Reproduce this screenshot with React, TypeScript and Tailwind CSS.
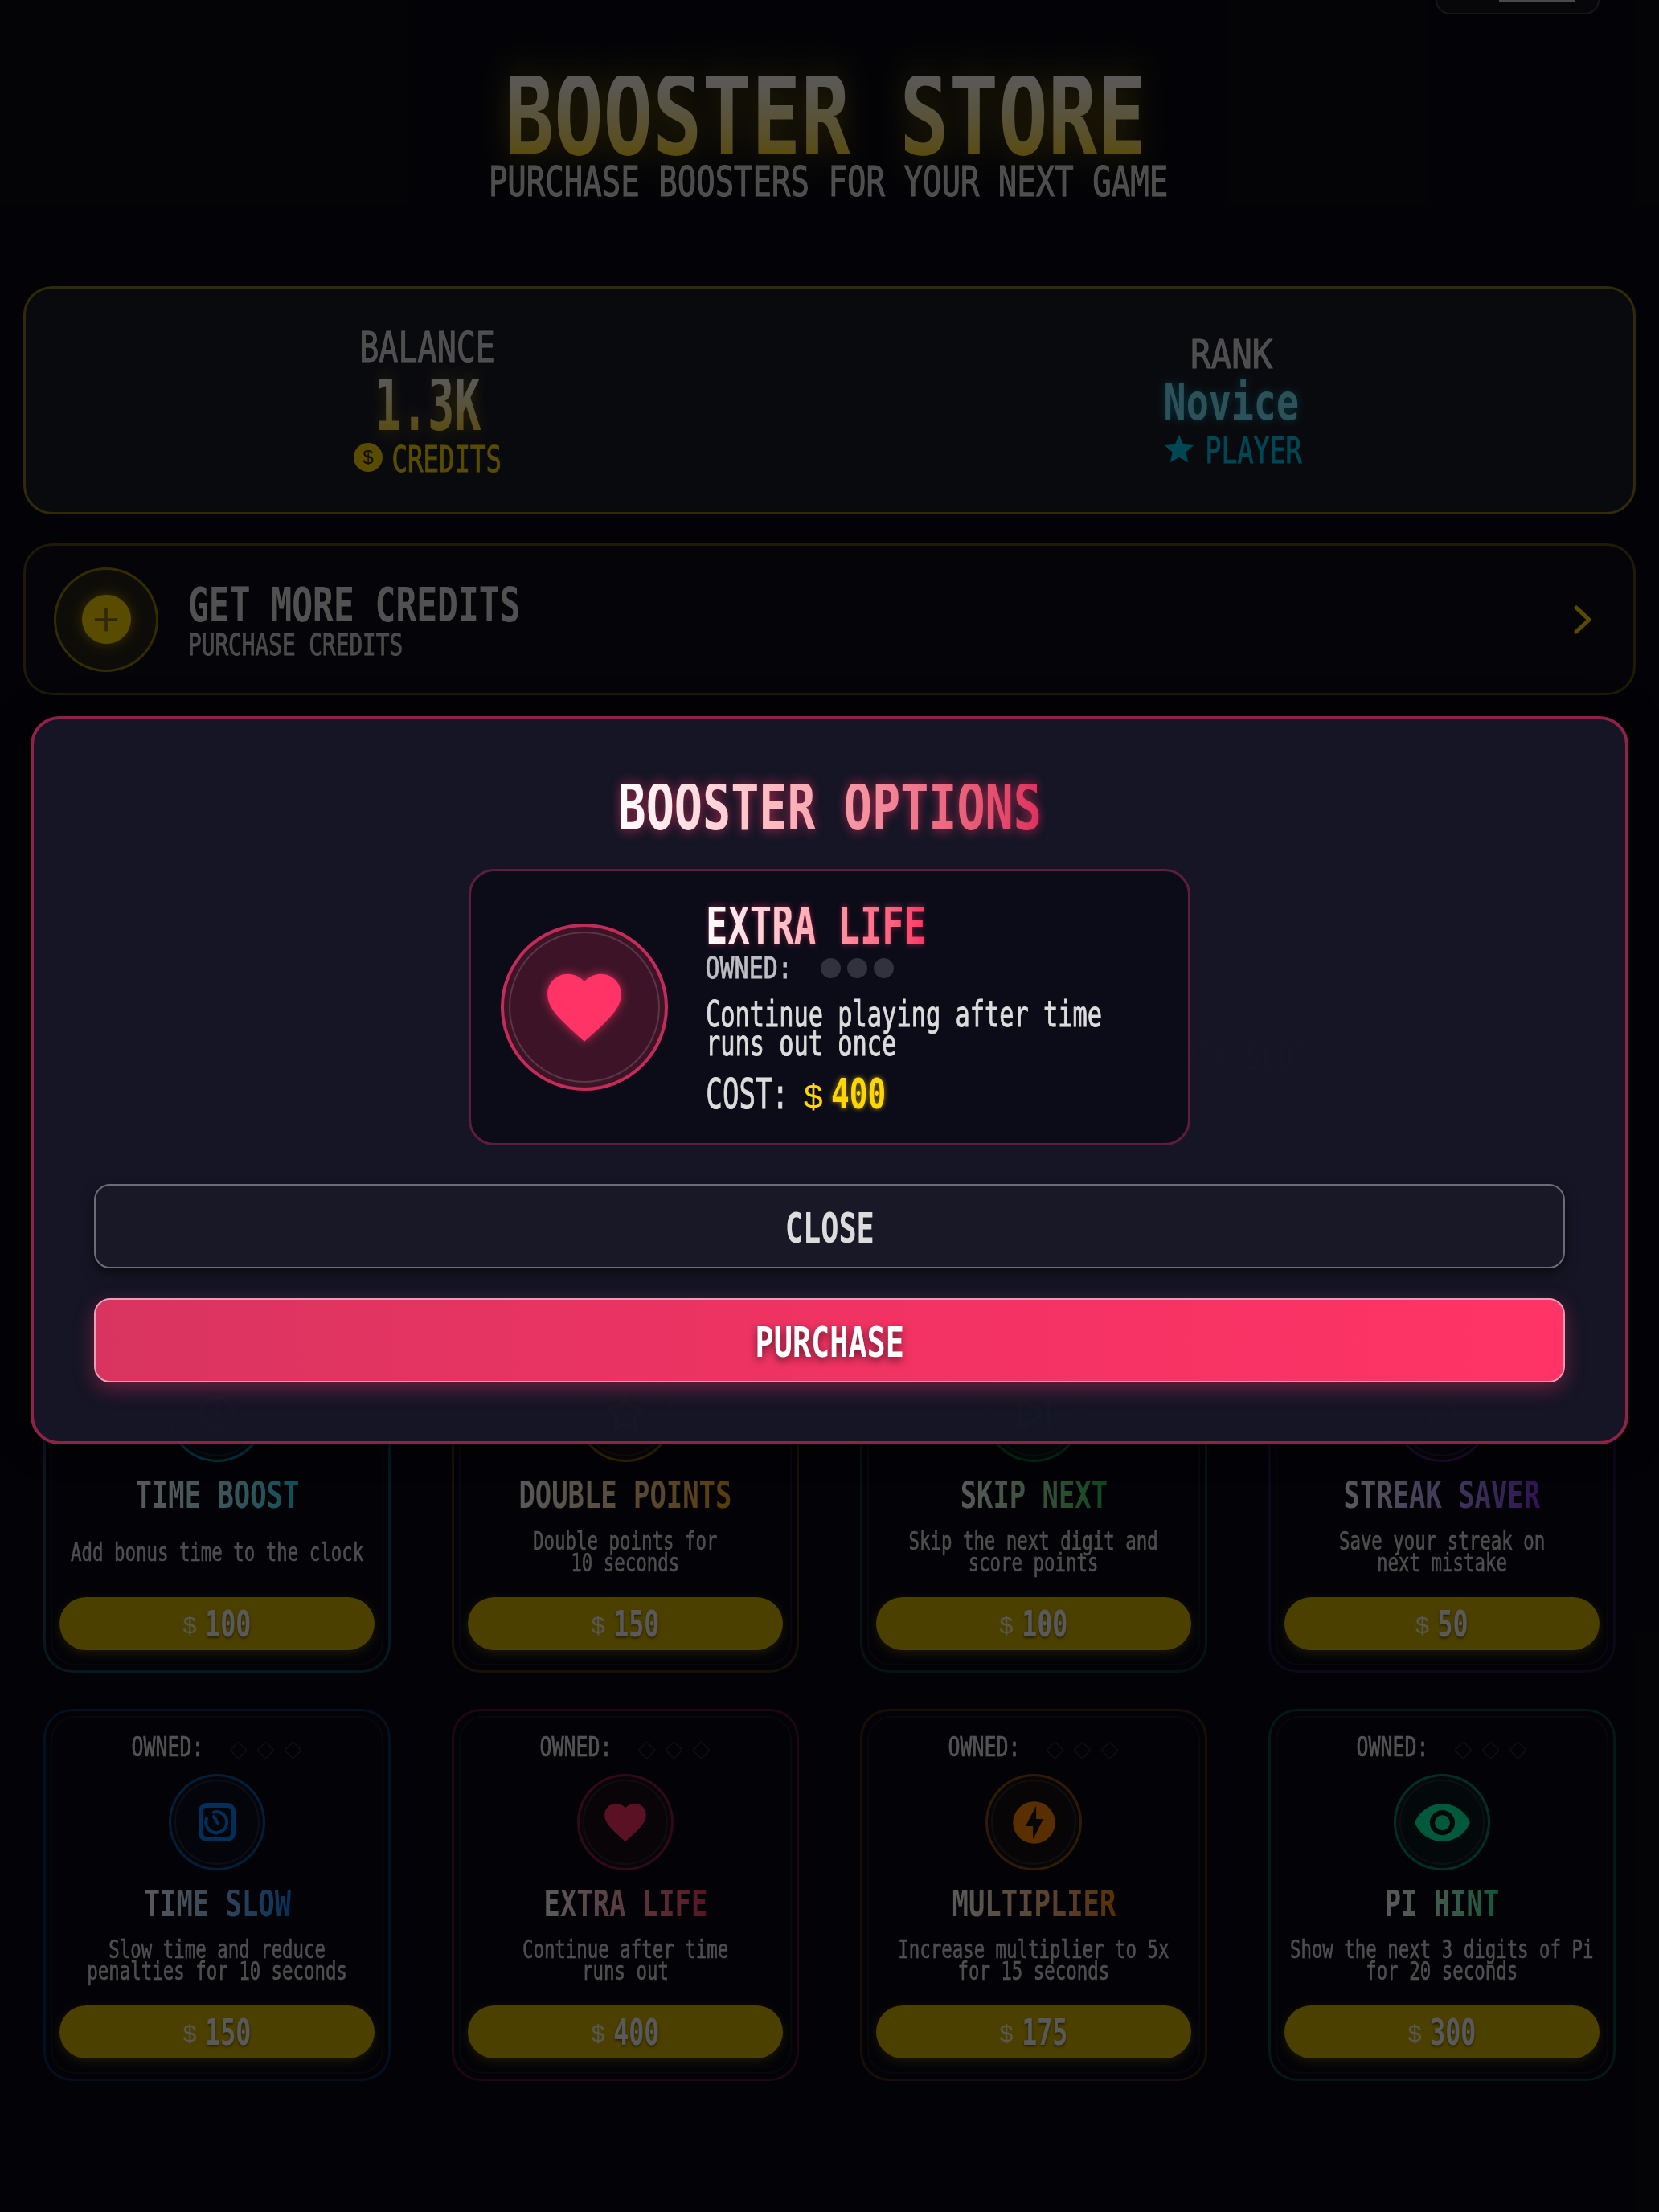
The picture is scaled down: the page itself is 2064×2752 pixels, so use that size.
import React from "react";
import { Clock, Star, SkipForward, Shield } from "lucide-react";

const heartPath =
  "M12 21.35l-1.45-1.32C5.4 15.36 2 12.28 2 8.5 2 5.42 4.42 3 7.5 3c1.74 0 3.41.81 4.5 2.09C13.09 3.81 14.76 3 16.5 3 19.58 3 22 5.42 22 8.5c0 3.78-3.4 6.86-8.55 11.54L12 21.35z";

function HeartIcon({ className }: { className: string }) {
  return (
    <svg viewBox="0 0 24 24" className={className} fill="currentColor">
      <path d={heartPath} />
    </svg>
  );
}

function TimerIcon() {
  return (
    <svg viewBox="0 0 46 48" className="h-[48px] w-[46px] text-[#0088ff]" fill="none" stroke="currentColor">
      <rect x="3" y="3" width="40" height="42" rx="7" strokeWidth="6" />
      <path d="M19 11.5a13 13 0 1 1-9 8" strokeWidth="4" strokeLinecap="round" />
      <path d="M19 17l5 8" strokeWidth="4" strokeLinecap="round" />
    </svg>
  );
}

function BoltIcon() {
  return (
    <svg viewBox="0 0 24 24" className="h-[63px] w-[63px] text-[#ff8800]" fill="currentColor">
      <path d="M12 2.02c-5.51 0-9.98 4.47-9.98 9.98s4.47 9.98 9.98 9.98 9.98-4.47 9.98-9.98S17.51 2.02 12 2.02zM11.48 20v-6.26H8L13 4v6.26h3.35L11.48 20z" />
    </svg>
  );
}

function EyeIcon() {
  return (
    <svg viewBox="0 0 24 24" className="h-[75px] w-[75px] text-[#00ffaa]" fill="currentColor">
      <path d="M12 4.5C7 4.5 2.73 7.61 1 12c1.73 4.39 6 7.5 11 7.5s9.27-3.11 11-7.5c-1.73-4.39-6-7.5-11-7.5zM12 17c-2.76 0-5-2.24-5-5s2.24-5 5-5 5 2.24 5 5-2.24 5-5 5zm0-8c-1.66 0-3 1.34-3 3s1.34 3 3 3 3-1.34 3-3-1.34-3-3-3z" />
    </svg>
  );
}

// the pixel font of the game isn't available, so a mono face gets squeezed to its width
function Sq({ box, sq, children }: { box: string; sq: string; children: React.ReactNode }) {
  return (
    <span className={`flex shrink-0 justify-center whitespace-nowrap ${box}`}>
      <span className={`block ${sq}`}>{children}</span>
    </span>
  );
}

interface Booster {
  name: string;
  desc: React.ReactNode;
  price: number;
  border: string;
  ring: string;
  title: string;
  icon: React.ReactNode;
}

const boosters: Booster[] = [
  {
    name: "TIME BOOST",
    desc: "Add bonus time to the clock",
    price: 100,
    border: "border-[#00e5ff]/30",
    ring: "border-[#00e5ff]/60 bg-[#00e5ff]/5",
    title: "to-[#00e5ff]",
    icon: <Clock className="h-[48px] w-[48px] text-[#00e5ff]" />,
  },
  {
    name: "DOUBLE POINTS",
    desc: (
      <>
        Double points for
        <br />
        10 seconds
      </>
    ),
    price: 150,
    border: "border-[#ffaa00]/25",
    ring: "border-[#ffaa00]/50 bg-[#ffaa00]/5",
    title: "to-[#ffaa00]",
    icon: <Star className="h-[48px] w-[48px] text-[#ffaa00]" />,
  },
  {
    name: "SKIP NEXT",
    desc: (
      <>
        Skip the next digit and
        <br />
        score points
      </>
    ),
    price: 100,
    border: "border-[#00ff66]/20",
    ring: "border-[#00ff66]/40 bg-[#00ff66]/5",
    title: "to-[#00cc55]",
    icon: <SkipForward className="h-[48px] w-[48px] text-[#00ff66]" />,
  },
  {
    name: "STREAK SAVER",
    desc: (
      <>
        Save your streak on
        <br />
        next mistake
      </>
    ),
    price: 50,
    border: "border-[#aa44ff]/20",
    ring: "border-[#aa44ff]/40 bg-[#aa44ff]/5",
    title: "to-[#8833ee]",
    icon: <Shield className="h-[48px] w-[48px] text-[#aa44ff]" />,
  },
  {
    name: "TIME SLOW",
    desc: (
      <>
        Slow time and reduce
        <br />
        penalties for 10 seconds
      </>
    ),
    price: 150,
    border: "border-[#0088ff]/30",
    ring: "border-[#0088ff]/60 bg-[#0088ff]/5",
    title: "to-[#0088ff]",
    icon: <TimerIcon />,
  },
  {
    name: "EXTRA LIFE",
    desc: (
      <>
        Continue after time
        <br />
        runs out
      </>
    ),
    price: 400,
    border: "border-[#ff3366]/30",
    ring: "border-[#ff3366]/50 bg-[#ff3366]/5",
    title: "to-[#ff3366]",
    icon: <HeartIcon className="h-[62px] w-[62px] text-[#ff3366]" />,
  },
  {
    name: "MULTIPLIER",
    desc: (
      <>
        Increase multiplier to 5x
        <br />
        for 15 seconds
      </>
    ),
    price: 175,
    border: "border-[#ff8800]/25",
    ring: "border-[#ff8800]/50 bg-[#ff8800]/5",
    title: "to-[#ff8800]",
    icon: <BoltIcon />,
  },
  {
    name: "PI HINT",
    desc: (
      <>
        Show the next 3 digits of Pi
        <br />
        for 20 seconds
      </>
    ),
    price: 300,
    border: "border-[#00ffaa]/25",
    ring: "border-[#00ffaa]/50 bg-[#00ffaa]/5",
    title: "to-[#00ffaa]",
    icon: <EyeIcon />,
  },
];

function BoosterCard({ b }: { b: Booster }) {
  return (
    <div className={`relative flex h-[463px] flex-col items-center rounded-[36px] border-[3px] bg-[#0b0b16] pt-[36px] ${b.border}`}>
      <div className="pointer-events-none absolute inset-[6px] rounded-[30px] border-2 border-white/5" />
      <div className="flex h-[24px] items-center gap-[31px]">
        <Sq box="w-[90px]" sq="scale-x-[.755]">
          <span className="text-[33px] leading-[24px] text-white/90 [-webkit-text-stroke:.6px]">OWNED:</span>
        </Sq>
        <div className="flex gap-[11px]">
          {[0, 1, 2].map((i) => (
            <div key={i} className="h-[23px] w-[23px] scale-[.7] rotate-45 rounded-[2px] border-2 border-white/15" />
          ))}
        </div>
      </div>
      <div className={`mt-[18px] flex h-[120px] w-[120px] items-center justify-center rounded-full border-[3px] ${b.ring}`}>
        <div className="flex h-[106px] w-[106px] items-center justify-center rounded-full border-2 border-white/10">
          {b.icon}
        </div>
      </div>
      <h3 className={`mt-[24px] scale-x-[.72] whitespace-nowrap bg-gradient-to-r from-white bg-clip-text text-[47px] leading-[34px] font-bold text-transparent ${b.title}`}>
        {b.name}
      </h3>
      <p className="mt-[27px] flex h-[54px] items-center whitespace-nowrap text-center text-[32px] leading-[27px] text-white/85 [-webkit-text-stroke:.5px]">
        <span className="scale-x-[.7]">{b.desc}</span>
      </p>
      <button className="mt-[29px] flex h-[66px] w-[392px] items-center justify-center gap-[11px] rounded-[33px] bg-[#d9b700] pt-[2px] shadow-[0_4px_12px_rgba(255,215,0,.25)]">
        <span className="font-['Liberation_Sans',sans-serif] text-[30px] text-white/90">$</span>
        <span
          className="flex justify-center text-[44px] leading-[32px] font-bold text-white [text-shadow:0_2px_4px_rgba(0,0,0,.5)]"
          style={{ width: `${String(b.price).length * 19}px` }}
        >
          <span className="scale-x-[.72]">{b.price}</span>
        </span>
      </button>
    </div>
  );
}

export default function App() {
  return (
    <div className="relative h-[2752px] w-full overflow-hidden bg-[#0a0a14] font-['DejaVu_Sans_Mono',monospace] text-white">
      <div className="flex flex-col px-[29px]">
        <div className="flex h-[18px] justify-end pr-[45px]">
          <div className="flex h-[18px] w-[204px] justify-center rounded-b-[28px] border-2 border-t-0 border-white/20 bg-[#14141f]">
            <div className="ml-[48px] h-[2px] w-[94px] bg-white/80" />
          </div>
        </div>

        <header className="mt-[77px] flex flex-col items-center">
          <h1 className="mr-[10px] scale-x-[.745] whitespace-nowrap bg-gradient-to-b from-white to-[#ffd700] bg-clip-text text-[137px] leading-[100px] font-bold text-transparent [filter:drop-shadow(0_0_24px_rgba(255,215,0,.45))]">
            BOOSTER STORE
          </h1>
          <p className="mt-[12px] mr-[3px] scale-x-[.75] whitespace-nowrap text-[52px] leading-[38px] text-white/85 [-webkit-text-stroke:1px]">
            PURCHASE BOOSTERS FOR YOUR NEXT GAME
          </p>
        </header>

        <section className="mt-[111px] flex h-[284px] rounded-[36px] border-[3px] border-[#ffd700]/50 bg-[#1c1d2a]">
          <div className="flex flex-1 flex-col items-center pt-[54px]">
            <span className="scale-x-[.77] text-[52px] leading-[38px] text-white/85 [-webkit-text-stroke:1px]">BALANCE</span>
            <span className="mt-[20px] scale-x-[.61] bg-gradient-to-b from-white to-[#ffd700] bg-clip-text text-[90px] leading-[66px] font-bold text-transparent [filter:drop-shadow(0_0_12px_rgba(255,215,0,.4))]">
              1.3K
            </span>
            <div className="mt-[14px] flex h-[36px] items-center gap-[12px]">
              <span className="flex h-[36px] w-[36px] items-center justify-center rounded-full bg-[#ffd700] font-['Liberation_Sans',sans-serif] text-[24px] text-[#3a3000]">
                $
              </span>
              <Sq box="w-[136px] pt-[10px]" sq="scale-x-[.72]">
                <span className="text-[45px] leading-[33px] text-[#ffd700] [-webkit-text-stroke:1px]">CREDITS</span>
              </Sq>
            </div>
          </div>
          <div className="flex flex-1 flex-col items-center pt-[64px]">
            <span className="scale-x-[.85] text-[50px] leading-[36px] text-white/85 [-webkit-text-stroke:1px]">RANK</span>
            <span className="mt-[19px] scale-x-[.74] text-[63px] leading-[46px] font-bold text-[#7fe8ff] [text-shadow:0_0_12px_rgba(0,229,255,.6)]">
              Novice
            </span>
            <div className="mt-[16px] flex h-[37px] items-center gap-[10px]">
              <svg viewBox="0 0 24 24" className="h-[44px] w-[44px] text-[#00c8ee]" fill="currentColor">
                <path d="M12 17.27L18.18 21l-1.64-7.03L22 9.24l-7.19-.61L12 2 9.19 8.63 2 9.24l5.46 4.73L5.82 21z" />
              </svg>
              <Sq box="w-[120px] pt-[10px]" sq="scale-x-[.755]">
                <span className="text-[44px] leading-[32px] text-[#00c8ee] [-webkit-text-stroke:1px]">PLAYER</span>
              </Sq>
            </div>
          </div>
        </section>

        <button className="mt-[36px] flex h-[189px] items-center rounded-[36px] border-[3px] border-[#ffd700]/30 bg-[#0f0f1a] pr-[52px] pl-[35px] text-left">
          <div className="flex h-[130px] w-[130px] items-center justify-center rounded-full border-[3px] border-[#ffd700]/50 bg-[#ffd700]/10">
            <div className="flex h-[61px] w-[61px] items-center justify-center rounded-full bg-[#ffd700] shadow-[0_0_16px_rgba(255,215,0,.6)]">
              <svg viewBox="0 0 24 24" className="h-[34px] w-[34px] text-[#8a7400]" fill="none" stroke="currentColor" strokeWidth="2.5">
                <path d="M12 2v20M2 12h20" />
              </svg>
            </div>
          </div>
          <div className="ml-[37px] flex flex-1 flex-col items-start pt-[6px]">
            <span className="origin-left scale-x-[.74] whitespace-nowrap text-[58px] leading-[42px] font-bold text-white/90">GET MORE CREDITS</span>
            <span className="mt-[14px] origin-left scale-x-[.73] whitespace-nowrap text-[38px] leading-[28px] text-white/80 [-webkit-text-stroke:.8px]">PURCHASE CREDITS</span>
          </div>
          <svg viewBox="0 0 22 36" className="h-[36px] w-[22px] text-[#ffd700]" fill="none" stroke="currentColor" strokeWidth="5" strokeLinecap="round" strokeLinejoin="round">
            <path d="M3 3l16 15L3 33" />
          </svg>
        </button>

        {/* slots row sits behind the dialog, only barely shows through */}
        <section className="relative mt-[27px] h-[726px]">
          <div className="absolute top-[129px] left-[1899px] h-[88px] w-[88px] rounded-full border-2 border-white/20" />
          <div className="absolute top-[258px] right-[397px] h-[130px] w-[130px] rounded-full border-2 border-white/20" />
          <span className="absolute top-[408px] right-[367px] scale-x-[.72] text-[46px] leading-[32px] font-bold text-white/30">EMPTY SLOT</span>
        </section>

        <div className="grid grid-cols-4 gap-x-[76px] gap-y-[45px] px-[25px]">
          {boosters.map((b, i) => (
            <BoosterCard key={i} b={b} />
          ))}
        </div>
      </div>

      <div className="absolute inset-0 bg-black/65" />

      <div className="absolute top-[891px] left-[38px] flex h-[906px] w-[1988px] flex-col rounded-[36px] border-[4px] border-[#8f2246] bg-[#161626]/97 px-[75px] pt-[81px] shadow-[0_0_40px_rgba(0,0,0,.6)]">
        <h2 className="scale-x-[.73] self-center whitespace-nowrap bg-gradient-to-r from-white to-[#dd2f5e] bg-clip-text text-[80px] leading-[58px] font-bold text-transparent [filter:drop-shadow(0_0_8px_rgba(255,51,102,.6))]">
          BOOSTER OPTIONS
        </h2>

        <div className="mt-[47px] flex h-[344px] w-[898px] items-center self-center rounded-[32px] border-[3px] border-[#5e1d3c] bg-[#0c0c19] pl-[37px]">
          <div className="flex h-[208px] w-[208px] shrink-0 items-center justify-center rounded-full border-[4px] border-[#c42c58] bg-[#3d1427]">
            <div className="flex h-[188px] w-[188px] items-center justify-center rounded-full border-2 border-white/15">
              <HeartIcon className="h-[110px] w-[110px] text-[#ff3366] [filter:drop-shadow(0_0_6px_rgba(255,51,102,.7))]" />
            </div>
          </div>
          <div className="ml-[47px] flex flex-col items-start pt-[5px]">
            <h3 className="origin-left scale-x-[.69] whitespace-nowrap bg-gradient-to-r from-white to-[#ff3366] bg-clip-text text-[66px] leading-[48px] font-bold text-transparent [filter:drop-shadow(0_0_4px_rgba(255,51,102,.5))]">
              EXTRA LIFE
            </h3>
            <div className="mt-[14px] flex h-[28px] items-center gap-[35px]">
              <Sq box="w-[108px] pt-[6px]" sq="scale-x-[.79]">
                <span className="text-[38px] leading-[28px] text-[#bdbdc4] [-webkit-text-stroke:.8px]">OWNED:</span>
              </Sq>
              <div className="flex gap-[8px]">
                {[0, 1, 2].map((i) => (
                  <div key={i} className="h-[25px] w-[25px] rounded-full bg-[#32323e]" />
                ))}
              </div>
            </div>
            <p className="mt-[26px] origin-left scale-x-[.674] whitespace-nowrap text-[45px] leading-[36px] text-[#dcdcdc] [-webkit-text-stroke:1px]">
              Continue playing after time
              <br />
              runs out once
            </p>
            <div className="mt-[30px] flex h-[37px] items-center">
              <Sq box="w-[103px]" sq="scale-x-[.67]">
                <span className="text-[51px] leading-[37px] text-[#dcdcdc] [-webkit-text-stroke:1px]">COST:</span>
              </Sq>
              <span className="ml-[19px] w-[23px] font-['Liberation_Sans',sans-serif] text-[42px] leading-[37px] text-[#ffd700]">$</span>
              <Sq box="ml-[11px] w-[68px]" sq="scale-x-[.74]">
                <span className="text-[51px] leading-[37px] font-bold text-[#ffd700] [text-shadow:0_0_8px_rgba(255,215,0,.6)]">400</span>
              </Sq>
            </div>
          </div>
        </div>

        <button className="mt-[48px] h-[105px] rounded-[20px] border-2 border-[#6c6c78] bg-[#181826] pt-[4px] text-[52px] leading-[38px] font-bold text-[#dcdcdc] shadow-[0_6px_16px_rgba(0,0,0,.5)]">
          <span className="inline-block scale-x-[.71]">CLOSE</span>
        </button>
        <button className="mt-[37px] h-[105px] rounded-[20px] border-2 border-[#e8a0b4] bg-gradient-to-r from-[#d93460] via-[#f03363] to-[#ff3366] pt-[4px] text-[52px] leading-[38px] font-bold text-white shadow-[0_8px_24px_rgba(255,51,102,.35)] [text-shadow:0_4px_12px_rgba(0,0,0,.6)]">
          <span className="inline-block scale-x-[.74]">PURCHASE</span>
        </button>
      </div>
    </div>
  );
}
